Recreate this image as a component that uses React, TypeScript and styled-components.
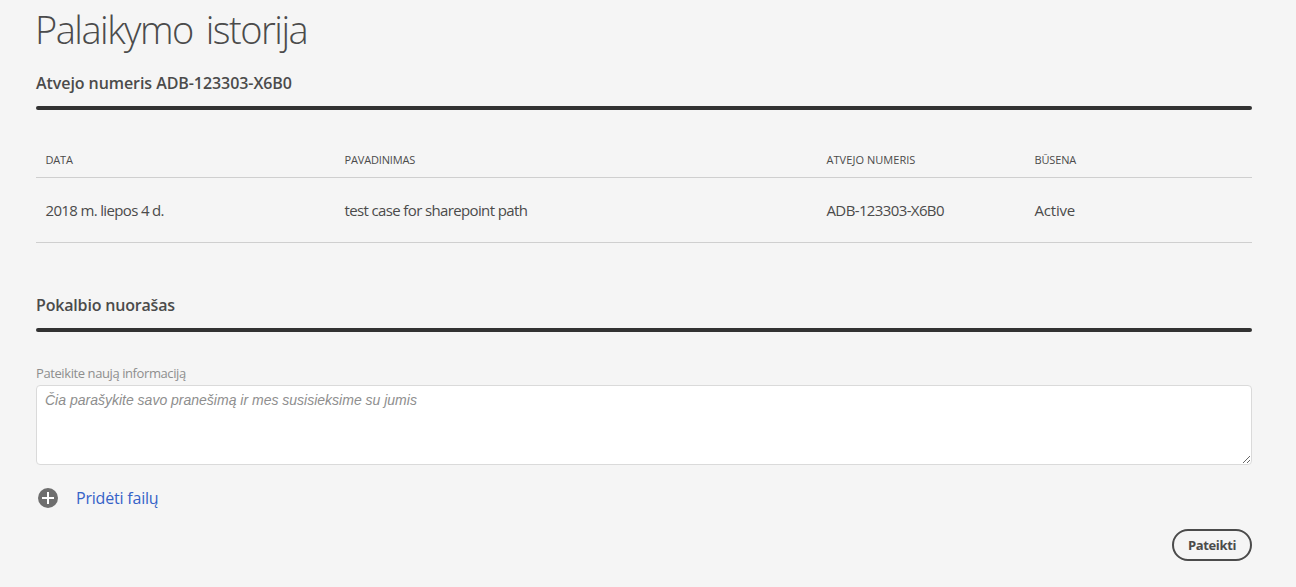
import styled, { createGlobalStyle } from "styled-components";

const GlobalStyle = createGlobalStyle`
  * {
    box-sizing: border-box;
  }
  body {
    margin: 0;
    background: #f5f5f5;
    color: #4b4b4b;
    font-family: "Open Sans", "Noto Sans", sans-serif;
  }
`;

const Page = styled.main`
  height: 587px;
  padding: 3px 44px 0 36px;
  overflow: hidden;
`;

const Title = styled.h1`
  margin: 0 0 0 -1px;
  font-size: 38px;
  font-weight: 300;
  line-height: 52px;
  letter-spacing: -1.5px;
  word-spacing: 4.5px;
  white-space: nowrap;
`;

const SectionTitle = styled.h2<{ $top: number; $spacing: number }>`
  margin: ${({ $top }) => $top}px 0 0;
  font-size: 16px;
  font-weight: 600;
  line-height: 24px;
  letter-spacing: ${({ $spacing }) => $spacing}px;
  white-space: nowrap;
`;

const Divider = styled.hr`
  height: 4px;
  margin: 11px 0 0;
  border: 0;
  border-radius: 2px;
  background: #323232;
`;

const Table = styled.div`
  margin-top: 33px;
`;

const Row = styled.div`
  display: grid;
  grid-template-columns: 299px 482px 208px 1fr;
  align-items: center;
  height: 65px;
  padding-left: 9px;
  border-bottom: 1px solid #cfcfcf;
  font-size: 15px;
  white-space: nowrap;
`;

const HeadRow = styled(Row)`
  height: 35px;
  padding: 0 0 2px 9px;
  font-size: 11px;
  text-transform: uppercase;
`;

const Cell = styled.span<{ $spacing: number }>`
  padding-left: 0.5px;
  letter-spacing: ${({ $spacing }) => $spacing}px;
`;

const Label = styled.label`
  display: block;
  margin-top: 31px;
  color: #8e8e8e;
  font-size: 13px;
  line-height: 20px;
  letter-spacing: -0.41px;
`;

const Message = styled.textarea`
  display: block;
  width: 100%;
  height: 80px;
  margin-top: 2px;
  padding: 6px 8px;
  border: 1px solid #dadada;
  border-radius: 4px;
  background: #fff;
  font: italic 14px/17px "Liberation Sans", Arial, sans-serif;
  resize: both;
  &::placeholder {
    color: #8e8e8e;
  }
`;

const AddFile = styled.a`
  display: flex;
  align-items: center;
  gap: 18px;
  width: max-content;
  height: 24px;
  margin: 21px 0 0 2px;
  color: #3562c8;
  font-size: 16px;
  letter-spacing: -0.2px;
`;

const Actions = styled.div`
  display: flex;
  justify-content: flex-end;
  margin-top: 19px;
`;

const SubmitButton = styled.button`
  width: 80px;
  height: 32px;
  padding: 0;
  border: 2px solid #4b4b4b;
  border-radius: 16px;
  background: transparent;
  color: #4b4b4b;
  font: inherit;
  font-size: 13px;
  font-weight: 700;
  letter-spacing: -0.35px;
`;

const PlusIcon = () => (
  <svg width="20" height="20" viewBox="0 0 20 20">
    <circle cx="10" cy="10" r="10" fill="#6e6e6e" />
    <path d="M10 4v12M4 10h12" stroke="#fff" strokeWidth="2" />
  </svg>
);

const columns = [
  { name: "Data", spacing: -0.2 },
  { name: "Pavadinimas", spacing: -0.15 },
  { name: "Atvejo numeris", spacing: 0.05 },
  { name: "Būsena", spacing: -0.15 },
];
const supportCase = [
  { value: "2018 m. liepos 4 d.", spacing: -0.65 },
  { value: "test case for sharepoint path", spacing: -0.63 },
  { value: "ADB-123303-X6B0", spacing: -0.62 },
  { value: "Active", spacing: -0.2 },
];

export default function App() {
  return (
    <>
      <GlobalStyle />
      <Page>
        <Title>Palaikymo istorija</Title>
        <SectionTitle $top={16} $spacing={-0.07}>
          Atvejo numeris ADB-123303-X6B0
        </SectionTitle>
        <Divider />
        <Table>
          <HeadRow>
            {columns.map(({ name, spacing }) => (
              <Cell key={name} $spacing={spacing}>
                {name}
              </Cell>
            ))}
          </HeadRow>
          <Row>
            {supportCase.map(({ value, spacing }) => (
              <Cell key={value} $spacing={spacing}>
                {value}
              </Cell>
            ))}
          </Row>
        </Table>
        <SectionTitle $top={50} $spacing={-0.18}>
          Pokalbio nuorašas
        </SectionTitle>
        <Divider />
        <Label htmlFor="message">Pateikite naują informaciją</Label>
        <Message
          id="message"
          placeholder="Čia parašykite savo pranešimą ir mes susisieksime su jumis"
        />
        <AddFile>
          <PlusIcon />
          <span>Pridėti failų</span>
        </AddFile>
        <Actions>
          <SubmitButton>Pateikti</SubmitButton>
        </Actions>
      </Page>
    </>
  );
}
